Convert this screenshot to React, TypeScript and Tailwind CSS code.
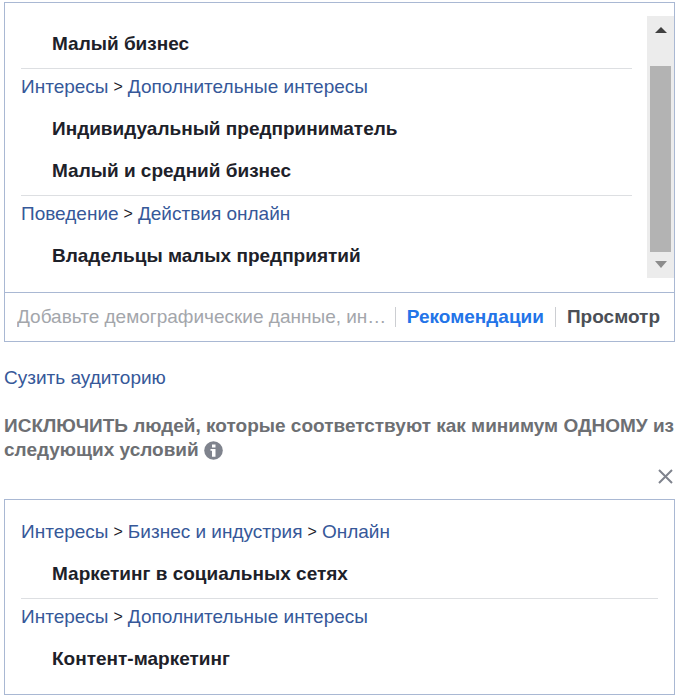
import { Fragment } from "react";

type Group = { path: string[]; items: string[] };

const included: Group[] = [
  { path: [], items: ["Малый бизнес"] },
  {
    path: ["Интересы", "Дополнительные интересы"],
    items: ["Индивидуальный предприниматель", "Малый и средний бизнес"],
  },
  { path: ["Поведение", "Действия онлайн"], items: ["Владельцы малых предприятий"] },
];

const excluded: Group[] = [
  { path: ["Интересы", "Бизнес и индустрия", "Онлайн"], items: ["Маркетинг в социальных сетях"] },
  { path: ["Интересы", "Дополнительные интересы"], items: ["Контент-маркетинг"] },
];

function GroupList({ groups }: { groups: Group[] }) {
  return (
    <ul className="min-w-0 flex-1 divide-y divide-[#dddfe2]">
      {groups.map((group, i) => (
        <li key={i} className="pb-[3px] last:pb-0">
          {group.path.length > 0 && (
            <nav className="mb-[3px] flex h-9 items-center gap-[5px] text-[#1d2129]">
              {group.path.map((part, n) => (
                <Fragment key={part}>
                  {n > 0 && <span className="text-base">&gt;</span>}
                  <a href="#" className="whitespace-nowrap text-[#365899]">
                    {part}
                  </a>
                </Fragment>
              ))}
            </nav>
          )}
          {group.items.map((item) => (
            <p key={item} className="flex h-[42px] items-center pl-[31px] font-bold text-[#1d2129]">
              {item}
            </p>
          ))}
        </li>
      ))}
    </ul>
  );
}

function Scrollbar() {
  return (
    <div className="flex w-[27px] flex-col bg-[#ececec]">
      <button aria-label="Прокрутить вверх" className="flex h-[50px] justify-center pt-[11px]">
        <svg width="12" height="6" viewBox="0 0 12 6" fill="#404040">
          <path d="M0 6 6 0l6 6z" />
        </svg>
      </button>
      <div className="mx-[3px] flex-1 bg-[#b3b3b3]" />
      <button aria-label="Прокрутить вниз" className="flex h-[26px] justify-center pt-[9px]">
        <svg width="12" height="7" viewBox="0 0 12 7" fill="#8c8c8c">
          <path d="M0 0h12L6 7z" />
        </svg>
      </button>
    </div>
  );
}

export default function App() {
  return (
    <main className="bg-white px-1 pt-0.5 font-['Liberation_Sans',Arial,sans-serif] text-[19px] leading-6">
      <section className="border border-[#a9b8d3]">
        <div className="flex gap-[15px] pt-[13px] pb-[14px] pl-4">
          <div className="flex min-w-0 flex-1 pt-[7px] pb-px">
            <GroupList groups={included} />
          </div>
          <Scrollbar />
        </div>
        <div className="flex h-[49px] items-center border-t border-[#a9b8d3] pr-[14px] pl-3">
          <input
            aria-label="Добавить условие"
            placeholder="Добавьте демографические данные, интересы или поведение"
            className="mr-[6px] min-w-0 flex-1 text-ellipsis outline-none placeholder:text-[#a3a6ab]"
          />
          <button className="border-l border-[#ccced2] px-[11px] font-bold leading-5 text-[#2374e8]">
            Рекомендации
          </button>
          <button className="border-l border-[#ccced2] pl-[11px] font-bold leading-5 text-[#4b4f56]">
            Просмотр
          </button>
        </div>
      </section>

      <a href="#" className="mt-6 inline-block text-[#365899]">
        Сузить аудиторию
      </a>

      <h2 className="mt-6 font-bold text-[#6d6f73]">
        ИСКЛЮЧИТЬ людей, которые соответствуют как минимум ОДНОМУ из следующих условий{" "}
        <button aria-label="Подробнее" className="align-middle">
          <svg width="19" height="19" viewBox="0 0 19 19">
            <circle cx="9.5" cy="9.5" r="9.3" fill="#7f838d" />
            <path d="M8 3.500h3.500v3H8zM6.500 8h5v7.800H8V9.800H6.500z" fill="#fff" />
          </svg>
        </button>
      </h2>

      <div className="flex justify-end pr-0.5">
        <button aria-label="Удалить" className="flex h-7 items-center">
          <svg width="15" height="15" viewBox="0 0 15 15" fill="none" stroke="#7f838d" strokeWidth="2">
            <path d="m1 1 13 13M14 1 1 14" />
          </svg>
        </button>
      </div>

      <section className="mt-[9px] flex border border-[#a9b8d3] px-4 py-[14px]">
        <GroupList groups={excluded} />
      </section>
    </main>
  );
}
